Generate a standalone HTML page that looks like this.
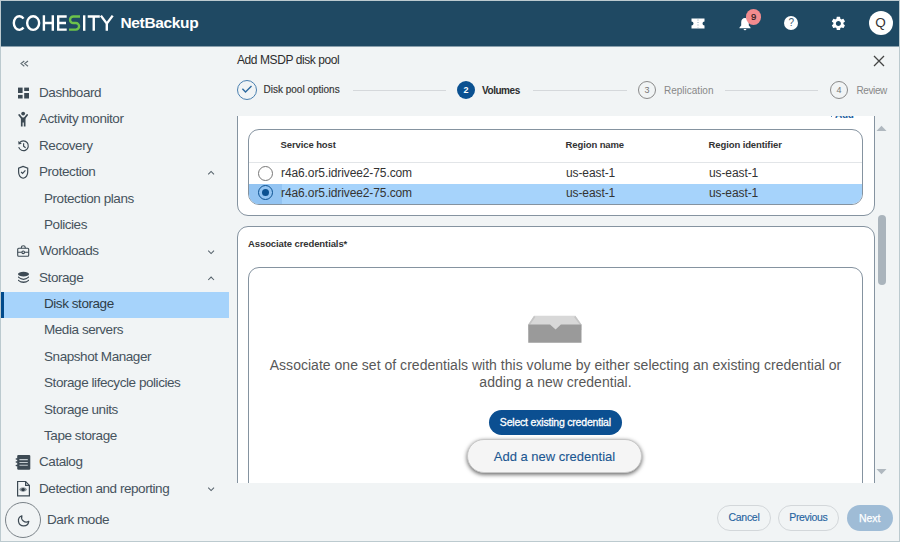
<!DOCTYPE html>
<html><head><meta charset="utf-8">
<style>
*{box-sizing:border-box;margin:0;padding:0}
html,body{width:900px;height:542px;overflow:hidden;background:#bccacf}
body{font-family:"Liberation Sans",sans-serif;position:relative}
.frame{position:absolute;left:1px;top:1px;width:898px;height:540px;background:#f1f4f5;overflow:hidden}
.abs{position:absolute;white-space:nowrap}
.hdr{position:absolute;left:0;top:0;width:898px;height:45px;background:#1f4963}
.logo{position:absolute;left:11px;top:11px;color:#fff;font-size:20.5px;letter-spacing:-0.6px;white-space:nowrap}
.logo .s{color:#8bc53f}
.nb{position:absolute;left:119.5px;top:12.5px;color:#fff;font-size:15.5px;font-weight:bold;white-space:nowrap;letter-spacing:-0.35px}
.side{position:absolute;left:0;top:45px;width:228px;height:495px}
.it{position:absolute;left:0;height:26px;width:228px;font-size:13.5px;color:#46535d;line-height:26px;white-space:nowrap;letter-spacing:-0.44px}
.it span{position:absolute;left:38px;top:0}
.it.sub span{left:43px}
.it svg{position:absolute}
.sel{background:#a6d3fb}
.sel:before{content:"";position:absolute;left:0;top:0;width:3px;height:26px;background:#004a8c}
.chev{position:absolute;left:205px;top:10px}
.main{position:absolute;left:228px;top:45px;width:670px;height:495px}
.step{position:absolute;top:35px;width:18px;height:18px;border-radius:50%;font-size:9px;text-align:center;line-height:18px}
.sline{position:absolute;top:44px;height:1px;background:#d5d8db}
.stxt{position:absolute;top:37.5px;font-size:10px;white-space:nowrap;line-height:14px}
.scroll{position:absolute;left:0;top:70px;width:646px;height:367px;overflow:hidden}
.card{position:absolute;left:8px;width:638px;background:#fff;border:1px solid #8593a0;border-radius:11px}
.tbl{position:absolute;left:19px;width:615px;border:1px solid #8593a0;border-radius:11px;overflow:hidden;background:#fff}
.th{position:absolute;font-size:9.5px;font-weight:bold;color:#333;white-space:nowrap;letter-spacing:-0.1px}
.td{position:absolute;font-size:12px;color:#333;white-space:nowrap;letter-spacing:-0.1px}
.btn{position:absolute;border-radius:14px;text-align:center;white-space:nowrap}
</style></head><body>
<div class="frame">
  <div class="abs" style="left:0;top:45px;width:898px;height:1px;background:#8aa0ad"></div>
  <div class="hdr">
    <svg class="abs" style="left:0;top:0" width="120" height="45" viewBox="0 0 120 45"><g transform="translate(-1,-1)" fill="none" stroke="#fff" stroke-width="2.4">
      <path d="M23.5 18.6A5.5 6.85 0 1 0 23.5 27.5"/>
      <ellipse cx="33.15" cy="23.05" rx="6" ry="6.8"/>
      <path d="M43.9 15.3V30.8M52.8 15.3V30.8M43.9 23.05H52.8"/>
      <path d="M66.7 16.5H58.2V29.6H66.7M58.2 23.05H66"/>
      <path d="M84.2 15.3V30.8"/>
      <path d="M87.7 16.5H99.8M93.75 16.5V30.8"/>
      <path d="M100.9 15.6L106.8 23.6L112.7 15.6M106.8 23.6V30.8"/>
    </g><g transform="translate(-1,-1)" fill="none" stroke="#6cc24a" stroke-width="2.4">
      <path d="M80 16.5H73.3A3.27 3.27 0 0 0 73.3 23.05H75.8A3.27 3.27 0 0 1 75.8 29.6H69"/>
    </g></svg>
    <div class="nb">NetBackup</div>
    <!-- ticket -->
    <svg class="abs" style="left:690px;top:17px" width="14" height="11" viewBox="0 0 14 11">
      <path d="M0.5 0.5H13.5V3.5A2 2 0 0 0 13.5 7.5V10.5H0.5V7.5A2 2 0 0 0 0.5 3.5Z" fill="#fff"/>
      <path d="M7 1.5V9.5" stroke="#8aa3b5" stroke-width="1" stroke-dasharray="1 1.5"/>
    </svg>
    <!-- bell -->
    <svg class="abs" style="left:737px;top:16px" width="14" height="14" viewBox="0 0 14 14">
      <path d="M7 1C4.6 1 3.2 2.9 3.2 5.2V8.6L1.5 10.6V11.3H12.5V10.6L10.8 8.6V5.2C10.8 2.9 9.4 1 7 1Z" fill="#fff"/>
      <path d="M5.6 12H8.4A1.4 1.2 0 0 1 5.6 12Z" fill="#fff"/>
    </svg>
    <div class="abs" style="left:744.9px;top:8.3px;width:15.5px;height:15.5px;border-radius:50%;background:#f28b8e;color:#2a1a1a;font-size:9.5px;line-height:15px;text-align:center;-webkit-text-stroke:0.2px #2a1a1a">9</div>
    <!-- help -->
    <div class="abs" style="left:783.3px;top:15.4px;width:14px;height:14px;border-radius:50%;background:#fff;color:#3a5a70;font-size:10px;line-height:14.5px;text-align:center">?</div>
    <!-- gear -->
    <svg class="abs" style="left:828.5px;top:14px" width="16.8" height="16.8" viewBox="0 0 24 24">
      <path fill="#fff" d="M19.14 12.94c.04-.3.06-.61.06-.94 0-.32-.02-.64-.07-.94l2.03-1.58a.49.49 0 0 0 .12-.61l-1.92-3.32a.49.49 0 0 0-.59-.22l-2.39.96c-.5-.38-1.03-.7-1.62-.94l-.36-2.54a.48.48 0 0 0-.48-.41h-3.84c-.24 0-.43.17-.47.41l-.36 2.54c-.59.24-1.13.57-1.62.94l-2.39-.96a.48.48 0 0 0-.59.22L2.74 8.87c-.12.21-.08.47.12.61l2.03 1.58c-.05.3-.09.63-.09.94s.02.64.07.94l-2.03 1.58a.49.49 0 0 0-.12.61l1.92 3.32c.12.22.37.29.59.22l2.39-.96c.5.38 1.03.7 1.62.94l.36 2.54c.05.24.24.41.48.41h3.84c.24 0 .44-.17.47-.41l.36-2.54c.59-.24 1.13-.56 1.62-.94l2.39.96c.22.08.47 0 .59-.22l1.92-3.32c.12-.22.07-.47-.12-.61l-2.01-1.58zM12 15.6c-1.98 0-3.6-1.62-3.6-3.6s1.62-3.6 3.6-3.6 3.6 1.62 3.6 3.6-1.62 3.6-3.6 3.6z"/>
    </svg>
    <!-- avatar -->
    <div class="abs" style="left:867.5px;top:10px;width:24px;height:24px;border-radius:50%;background:#fff;color:#333;font-size:13.5px;line-height:24px;text-align:center">Q</div>
  </div>

  <div class="side">
    <div class="it" style="top:34px"><span>Dashboard</span></div>
    <div class="it" style="top:60px"><span>Activity monitor</span></div>
    <div class="it" style="top:87px"><span>Recovery</span></div>
    <div class="it" style="top:113px"><span>Protection</span></div>
    <div class="it sub" style="top:140px"><span>Protection plans</span></div>
    <div class="it sub" style="top:166px"><span>Policies</span></div>
    <div class="it" style="top:192px"><span>Workloads</span></div>
    <div class="it" style="top:219px"><span>Storage</span></div>
    <div class="abs sel" style="left:0;top:246px;width:228px;height:26px"></div>
    <div class="it sub" style="top:245px;color:#2f3d48"><span>Disk storage</span></div>
    <div class="it sub" style="top:271px"><span>Media servers</span></div>
    <div class="it sub" style="top:298px"><span>Snapshot Manager</span></div>
    <div class="it sub" style="top:324px"><span>Storage lifecycle policies</span></div>
    <div class="it sub" style="top:351px"><span>Storage units</span></div>
    <div class="it sub" style="top:377px"><span>Tape storage</span></div>
    <div class="it" style="top:403px"><span>Catalog</span></div>
    <div class="it" style="top:430px"><span>Detection and reporting</span></div>
    <div class="abs" style="left:3.8px;top:455.5px;width:36.5px;height:36.5px;border-radius:50%;border:1px solid #7a8288"></div>
    <div class="abs" style="left:46px;top:465.5px;font-size:13.5px;color:#46535d;letter-spacing:-0.44px">Dark mode</div>
  </div>
  <svg class="abs" style="left:0;top:0" width="228" height="540" viewBox="0 0 228 540"><g transform="translate(-1,-1)">
    <path d="M24.3 61L21 63.6L24.3 66.2M28 61L24.7 63.6L28 66.2" fill="none" stroke="#5d6970" stroke-width="1.1"/>
    <g fill="#3d4a54">
      <rect x="18" y="87.6" width="4.6" height="5.4"/><rect x="24.2" y="87.6" width="4.8" height="3.4"/><rect x="18" y="94.9" width="4.6" height="3.6"/><rect x="24.2" y="93" width="4.8" height="5.5"/>
      <circle cx="23.15" cy="113.6" r="1.9"/>
      <path d="M20.9 117.6H25.5V126.6H23.8V122.6H22.6V126.6H20.9Z"/>
      <path d="M19.2 115L21.8 118.3M27.1 115L24.5 118.3" stroke="#3d4a54" stroke-width="1.8" stroke-linecap="round"/>
    </g>
    <g fill="none" stroke="#3d4a54" stroke-width="1.2">
      <path d="M19.6 142.7A4.9 4.9 0 1 1 18.7 147.2"/>
      <path d="M23.6 143.2V146.2L25.6 147.8"/>
      <path d="M23.15 166.4L18.6 168.1V171.9C18.6 174.8 20.5 177.4 23.15 178.2C25.8 177.4 27.7 174.8 27.7 171.9V168.1Z"/>
      <path d="M21.1 172L22.6 173.4L25.4 170.4"/>
      <rect x="17.7" y="248.3" width="11" height="7.9" rx="1" stroke-width="1.1"/>
      <path d="M21.4 248.3V247.2A1.9 1.5 0 0 1 25.2 247.2V248.3M17.7 252.3H28.7" stroke-width="1.1"/>
      <path d="M208.2 174.3L211.1 171.4L214 174.3M208.2 250.6L211.1 253.5L214 250.6M208.2 280L211.1 277.1L214 280M208.2 487.6L211.1 490.5L214 487.6" stroke="#56626b" stroke-width="1.05"/>
    </g>
    <path d="M18.2 140.9L18.5 144.4L21.9 143.8Z" fill="#3d4a54"/>
    <circle cx="23.2" cy="252.3" r="1.3" fill="#f1f4f5" stroke="#3d4a54" stroke-width="1.1"/>
    <g fill="#3d4a54">
      <ellipse cx="23.5" cy="274.1" rx="5.5" ry="2.35"/>
      <path d="M18 276.3Q23.5 281.1 29 276.3V277.6Q23.5 282.4 18 277.6Z"/>
      <path d="M18 279.4Q23.5 283.8 29 279.4V280.7Q23.5 285.1 18 280.7Z"/>
      <rect x="17.2" y="454.9" width="13.1" height="14.8" rx="1.2"/>
      <rect x="15.6" y="458.2" width="2.6" height="1.5" rx="0.7"/><rect x="15.6" y="461.3" width="2.6" height="1.5" rx="0.7"/><rect x="15.6" y="464.8" width="2.6" height="1.5" rx="0.7"/>
    </g>
    <path d="M19.4 459.6H27.8M19.4 462.5H27.8M19.4 465.3H27.8" stroke="#c3cbd0" stroke-width="1.1"/>
    <g fill="none" stroke="#3d4a54" stroke-width="1.2">
      <path d="M17.6 481.5H25.6L29.4 485.4V495.8H17.6Z"/>
      <path d="M25.6 481.5V485.4H29.4"/>
    </g>
    <path d="M19.2 489.6C20.9 486.6 25.3 486.6 27 489.6C25.3 492.6 20.9 492.6 19.2 489.6Z" fill="#8a949a"/>
    <circle cx="23.1" cy="489.6" r="1.7" fill="#2f3b44"/>
    <path d="M21.9 515.7A5.2 5.2 0 1 0 28.8 521.3A4.7 4.7 0 0 1 21.9 515.7Z" fill="none" stroke="#3d4a54" stroke-width="1.2" stroke-linejoin="round"/>
  </g></svg>

  <div class="main">
    <div class="abs" style="left:8px;top:7px;font-size:12px;color:#2d2d2d;letter-spacing:-0.42px">Add MSDP disk pool</div>
    <svg class="abs" style="left:644px;top:9px" width="12" height="12" viewBox="0 0 12 12"><path d="M1 1L11 11M11 1L1 11" stroke="#444" stroke-width="1.3"/></svg>
    <!-- stepper -->
    <div class="abs" style="left:8px;top:34.2px;width:20px;height:20px;border-radius:50%;border:1.3px solid #4a80b0"></div>
    <svg class="abs" style="left:8px;top:34.2px" width="20" height="20" viewBox="0 0 20 20"><path d="M5.4 8.8L8.5 11.9L14.5 5.9" fill="none" stroke="#2d6a9f" stroke-width="1.4"/></svg>
    <div class="stxt" style="left:34.5px;top:37px;color:#333;-webkit-text-stroke:0.15px #333">Disk pool options</div>
    <div class="sline" style="left:123.5px;width:93px"></div>
    <div class="step" style="left:228px;background:#0b5191;color:#fff;font-weight:bold">2</div>
    <div class="stxt" style="left:253px;color:#2d2d2d;font-weight:bold;letter-spacing:-0.45px">Volumes</div>
    <div class="sline" style="left:304px;width:94px"></div>
    <div class="step" style="left:409px;border:1px solid #8a8a8a;color:#777;line-height:16px">3</div>
    <div class="stxt" style="left:435px;color:#888">Replication</div>
    <div class="sline" style="left:496px;width:93px"></div>
    <div class="step" style="left:601px;border:1px solid #8a8a8a;color:#777;line-height:16px">4</div>
    <div class="stxt" style="left:627.5px;color:#888;letter-spacing:-0.4px">Review</div>

    <div class="scroll">
      <div class="abs" style="left:606px;top:-6.8px;font-size:10px;font-weight:bold;color:#1f5fa0;z-index:2;letter-spacing:-0.3px">Add</div><div class="abs" style="left:601.5px;top:0px;width:1.2px;height:1.2px;background:#5b8fc0;z-index:2"></div>
      <div class="card" style="top:-29px;height:129px">
        <div class="tbl" style="top:41px;height:75.5px;left:10px">
          <div class="th" style="left:31.5px;top:9px">Service host</div>
          <div class="th" style="left:316.5px;top:9px">Region name</div>
          <div class="th" style="left:459.5px;top:9px">Region identifier</div>
          <div class="abs" style="left:0;top:31.8px;width:615px;height:1px;background:#e2e5e8"></div>
          <div class="abs" style="left:9px;top:36px;width:15px;height:15px;border-radius:50%;border:1px solid #777"></div>
          <div class="td" style="left:32px;top:35.5px">r4a6.or5.idrivee2-75.com</div>
          <div class="td" style="left:317px;top:35.5px">us-east-1</div>
          <div class="td" style="left:460px;top:35.5px">us-east-1</div>
          <div class="abs" style="left:0;top:54px;width:615px;height:22px;background:#a6d3fb"></div>
          <div class="abs" style="left:0;top:54px;width:32.5px;height:22px;background:#93c4f2"></div>
          <div class="abs" style="left:9px;top:55px;width:15px;height:15px;border-radius:50%;border:1.3px solid #0b5191"></div>
          <div class="abs" style="left:13px;top:59px;width:7px;height:7px;border-radius:50%;background:#0b5191"></div>
          <div class="td" style="left:32px;top:55.5px">r4a6.or5.idrivee2-75.com</div>
          <div class="td" style="left:317px;top:55.5px">us-east-1</div>
          <div class="td" style="left:460px;top:55.5px">us-east-1</div>
        </div>
      </div>
      <div class="card" style="top:110px;height:300px">
        <div class="th" style="left:10px;top:11px">Associate credentials*</div>
        <div class="tbl" style="top:40px;height:300px;left:10px">
          <svg class="abs" style="left:278.3px;top:47px" width="56" height="29" viewBox="0 0 56 29">
            <path d="M7.1 0.8H48.3L54.5 9.4V15H1.25V9.4Z" fill="#d8d8d8"/>
            <path d="M7.1 0.8L1.25 9.4H3.2L8.2 2.3Z M48.3 0.8L54.5 9.4H52.6L47.2 2.3Z" fill="#c6c6c6"/>
            <path d="M1.25 9.4H23L28.6 14.4L33.9 9.4H54.5V27.7H1.25Z" fill="#9a9a9a"/>
          </svg>
          <div class="abs" style="left:0;top:88.7px;width:613px;text-align:center;font-size:14px;color:#585858;line-height:17.3px;white-space:normal;letter-spacing:0.02px">Associate one set of credentials with this volume by either selecting an existing credential or<br>adding a new credential.</div>
          <div class="btn" style="left:239.7px;top:141.5px;width:133.3px;height:25px;background:#0b4f91;color:#fff;font-size:10.5px;line-height:25px;border-radius:13px;letter-spacing:-0.2px;-webkit-text-stroke:0.3px #fff">Select existing credential</div>
          <div class="btn" style="left:217.8px;top:171px;width:175.3px;height:34px;background:#f5f5f5;color:#1b5791;font-size:13px;line-height:33.5px;border-radius:17px;box-shadow:0 1.5px 4.5px rgba(0,0,0,0.62);border:1px solid #c8c8c8;-webkit-text-stroke:0.1px #1b5791">Add a new credential</div>
        </div>
      </div>
    </div>
    <!-- scrollbar -->
    <svg class="abs" style="left:647.2px;top:79.3px" width="11" height="7" viewBox="0 0 11 7"><path d="M0.5 6H10.5L5.5 0.8Z" fill="#b0b8bf"/></svg>
    <div class="abs" style="left:649px;top:169px;width:8px;height:70px;border-radius:4px;background:#aab4bc"></div>
    <svg class="abs" style="left:647.2px;top:421.5px" width="11" height="7" viewBox="0 0 11 7"><path d="M0.5 1H10.5L5.5 6.2Z" fill="#b0b8bf"/></svg>

    <!-- footer -->
    <div class="btn" style="left:488px;top:459px;width:54px;height:26.3px;border:1px solid #d3d7da;color:#2563a0;font-size:10.5px;line-height:23.5px;border-radius:13.5px;letter-spacing:-0.3px;-webkit-text-stroke:0.12px #2563a0">Cancel</div>
    <div class="btn" style="left:548.8px;top:459px;width:61px;height:26.3px;border:1px solid #d3d7da;color:#2563a0;font-size:10.5px;line-height:23.5px;border-radius:13.5px;letter-spacing:-0.35px;-webkit-text-stroke:0.12px #2563a0">Previous</div>
    <div class="btn" style="left:617.7px;top:459.3px;width:46px;height:25.7px;background:#9fbcd6;color:#fff;font-size:10.5px;line-height:26.7px;border-radius:13px;letter-spacing:-0.1px;-webkit-text-stroke:0.25px #fff">Next</div>
  </div>
</div>
</body></html>
